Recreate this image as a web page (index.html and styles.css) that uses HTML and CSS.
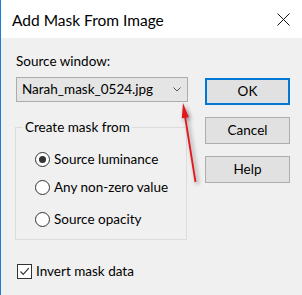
FILE: index.html
```html
<!DOCTYPE html>
<html>
<head>
<meta charset="utf-8">
<link rel="stylesheet" href="styles.css">
</head>
<body>
<div class="window">
  <div class="titlebar">
    <span class="title">Add Mask From Image</span>
    <svg class="close" width="13" height="13" viewBox="0 0 13 13"><path d="M0.5 0.5 L12.5 12.5 M12.5 0.5 L0.5 12.5" stroke="#111" stroke-width="1" fill="none"/></svg>
  </div>
  <div class="content">
    <div class="left">
      <div class="label">Source window:</div>
      <div class="select">
        <span class="select-text">Narah_mask_0524.jpg</span>
        <svg class="chevron" width="8" height="5" viewBox="0 0 8 5"><path d="M0.5 0.5 L4 4 L7.5 0.5" stroke="#555" stroke-width="1" fill="none"/></svg>
      </div>
      <fieldset class="group">
        <legend class="legend">Create mask from</legend>
        <div class="radio-row r1"><span class="radio checked"></span><span>Source luminance</span></div>
        <div class="radio-row r2"><span class="radio"></span><span>Any non-zero value</span></div>
        <div class="radio-row r3"><span class="radio"></span><span>Source opacity</span></div>
      </fieldset>
      <div class="check-row">
        <span class="checkbox"><svg width="13" height="13" viewBox="0 0 13 13"><path d="M2.5 6.5 L5.2 9.3 L10.8 3.2" stroke="#333" stroke-width="1.2" fill="none"/></svg></span>
        <span>Invert mask data</span>
      </div>
    </div>
    <div class="right">
      <div class="btn default">OK</div>
      <div class="btn">Cancel</div>
      <div class="btn">Help</div>
    </div>
  </div>
  <svg class="arrow" width="302" height="295" viewBox="0 0 302 295">
    <line x1="185" y1="116" x2="195.5" y2="182" stroke="#e3161b" stroke-width="1.8"/>
    <polygon points="183,103 188.8,117.3 181.8,118.3" fill="#e3161b"/>
  </svg>
</div>
</body>
</html>
```
FILE: styles.css
```css
html, body {
  margin: 0;
  padding: 0;
}
body {
  font-family: Lato, "Liberation Sans", sans-serif;
  font-size: 13.5px;
  line-height: 17px;
  color: #000;
}
.window {
  position: relative;
  width: 302px;
  height: 295px;
  box-sizing: border-box;
  border-left: 1px solid #1a7dd5;
  background: #f0f0f0;
  overflow: hidden;
}
.titlebar {
  height: 38px;
  background: #fff;
  display: flex;
  align-items: center;
  justify-content: space-between;
  padding: 1px 12px 0 11px;
  box-sizing: border-box;
}
.title {
  font-size: 15.5px;
  line-height: 20px;
}
.close {
  display: block;
  margin-top: -1px;
}
.content {
  display: flex;
  padding: 15px 0 0 14px;
}
.left {
  width: 173px;
  display: flex;
  flex-direction: column;
}
.label {
  padding-left: 1px;
}
.select {
  margin: 7px 0 0 1px;
  height: 25px;
  box-sizing: border-box;
  border: 1px solid #acacac;
  background: #e5e5e5;
  display: flex;
  align-items: center;
  justify-content: space-between;
  padding: 0 6px 0 5px;
}
.chevron {
  display: block;
}
.group {
  margin: 17px 1px 0 0;
  padding: 0 0 10px 7px;
  border: 1px solid #dcdcdc;
  min-width: 0;
}
.legend {
  padding: 0 2px;
}
.radio-row {
  height: 20px;
  margin-left: 12px;
  display: flex;
  align-items: center;
  gap: 4px;
}
.r1 { margin-top: 13px; }
.r2 { margin-top: 8px; }
.r3 { margin-top: 12px; }
.radio {
  width: 15px;
  height: 15px;
  box-sizing: border-box;
  border: 1px solid #333;
  border-radius: 50%;
  background: #fff;
  display: flex;
  align-items: center;
  justify-content: center;
}
.radio.checked::after {
  content: "";
  width: 7px;
  height: 7px;
  border-radius: 50%;
  background: #333;
}
.check-row {
  margin: 21px 0 0 2px;
  height: 20px;
  display: flex;
  align-items: center;
  gap: 4px;
}
.checkbox {
  width: 15px;
  height: 15px;
  box-sizing: border-box;
  border: 1px solid #333;
  background: #fff;
  display: flex;
  align-items: center;
  justify-content: center;
}
.checkbox svg {
  display: block;
}
.right {
  margin-left: 17px;
  width: 85px;
  padding-top: 25px;
  display: flex;
  flex-direction: column;
  gap: 12px;
}
.btn {
  height: 27px;
  box-sizing: border-box;
  border: 1px solid #adadad;
  background: #e1e1e1;
  display: flex;
  align-items: center;
  justify-content: center;
}
.btn.default {
  border: 2px solid #0078d7;
}
.arrow {
  position: absolute;
  left: -1px;
  top: 0;
  pointer-events: none;
  filter: drop-shadow(2px 2px 2px rgba(0,0,0,0.45));
}
```
